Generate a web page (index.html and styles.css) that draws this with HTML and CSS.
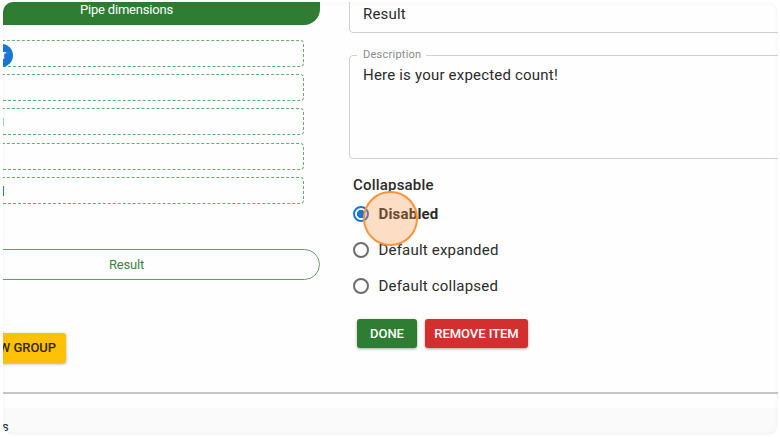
FILE: index.html
```html
<!DOCTYPE html>
<html lang="en">
<head>
<meta charset="utf-8">
<title>Form editor</title>
<link rel="stylesheet" href="styles.css">
</head>
<body>
<div class="frame">
  <main class="editor">
    <section class="groups">
      <div class="pill pill-active">Pipe dimensions</div>
      <div class="slots">
        <div class="slot"><span class="badge">r</span></div>
        <div class="slot"></div>
        <div class="slot"><span class="badge-edge"></span></div>
        <div class="slot"></div>
        <div class="slot"><span class="badge-edge badge-edge-dark"></span></div>
      </div>
      <div class="pill pill-outline">Result</div>
      <button class="btn btn-new">NEW GROUP</button>
    </section>
    <section class="settings">
      <div class="field field-title">Result</div>
      <fieldset class="field field-description">
        <legend>Description</legend>
        <div class="value">Here is your expected count!</div>
      </fieldset>
      <h2 class="heading">Collapsable</h2>
      <div class="options">
        <div class="option selected"><span class="radio"></span><span>Disabled</span><span class="pointer"></span></div>
        <div class="option"><span class="radio"></span><span>Default expanded</span></div>
        <div class="option"><span class="radio"></span><span>Default collapsed</span></div>
      </div>
      <div class="actions">
        <button class="btn btn-done">DONE</button>
        <button class="btn btn-remove">REMOVE ITEM</button>
      </div>
    </section>
  </main>
  <footer class="footer">s</footer>
</div>
</body>
</html>
```
FILE: styles.css
```css
* { box-sizing: border-box; }

body {
  margin: 0;
  background: #fff;
  font-family: Roboto, "Liberation Sans", sans-serif;
  color: #2b2b2b;
}

.frame {
  position: relative;
  width: 775px;
  height: 433px;
  margin: 2px 2px 2px 3px;
  overflow: hidden;
  border-radius: 10px;
  background: #fefefe;
}

.frame::after {
  content: "";
  position: absolute;
  inset: 0;
  border-radius: 10px;
  box-shadow: inset 0 0 5px rgba(0, 0, 0, 0.05);
  pointer-events: none;
}

.editor {
  display: flex;
  height: 392px;
  border-bottom: 2px solid #c6c6c6;
}

.groups {
  width: 387px;
  margin-left: -70px;
  flex: none;
}

.pill {
  display: flex;
  align-items: center;
  justify-content: center;
  height: 31px;
  border-radius: 16px;
  font-size: 13px;
  letter-spacing: -0.2px;
}

.pill-active {
  height: 39px;
  margin-top: -16px;
  padding-top: 8px;
  background: #2e7d32;
  color: #fff;
}

.pill-outline {
  border: 1px solid #68a06b;
  color: #3c8540;
  margin-top: 45px;
}

.slots {
  display: flex;
  flex-direction: column;
  gap: 7.2px;
  padding: 15px 16px 0 20px;
}

.slot {
  display: flex;
  align-items: center;
  height: 27px;
  border: 1px dashed #66ad6a;
  border-radius: 4px;
}

.badge {
  width: 23px;
  height: 23px;
  margin: 3px 0 0 36px;
  padding-right: 7px;
  border-radius: 50%;
  background: #1976d2;
  color: #fff;
  font-size: 12px;
  font-weight: 500;
  line-height: 22px;
  text-align: right;
}

.badge-edge {
  width: 1px;
  height: 8px;
  margin-left: 49px;
  background: #a9cdf0;
}

.badge-edge-dark {
  height: 10px;
  margin-top: 2px;
  background: #3479bd;
}

.btn {
  height: 29px;
  padding: 0;
  border: 0;
  border-radius: 3px;
  font: 500 13px Roboto, "Liberation Sans", sans-serif;
  letter-spacing: -0.05px;
  color: #fff;
  box-shadow: 0 1px 3px rgba(0, 0, 0, 0.35);
}

.btn-new {
  display: block;
  width: 103px;
  height: 30px;
  margin: 53px 0 0 30px;
  padding-right: 10px;
  background: #ffc107;
  color: #32270a;
  text-align: right;
}

.settings {
  flex: none;
  width: 460px;
  margin-left: 29px;
}

.field {
  border: 1px solid #d0d0d0;
  border-radius: 4px;
  font-size: 15px;
  letter-spacing: 0.2px;
}

.field-title {
  height: 43px;
  margin-top: -12px;
  padding: 15px 13px 0;
  line-height: 17px;
}

.field-description {
  height: 110.5px;
  margin: 15px 0 0;
  padding: 0 13px;
}

.field-description legend {
  margin-left: -6px;
  padding: 0 5px 0 6px;
  font-size: 11px;
  letter-spacing: 0.25px;
  line-height: 14px;
  color: #8a8a8a;
}

.value {
  margin-top: 5px;
  line-height: 17px;
}

.heading {
  margin: 17.5px 0 0 4px;
  font-size: 15px;
  font-weight: 500;
  line-height: 18px;
  letter-spacing: 0.2px;
}

.options {
  display: flex;
  flex-direction: column;
  gap: 18px;
  margin: 11px 0 0 3.5px;
}

.option {
  position: relative;
  display: flex;
  align-items: center;
  gap: 10px;
  height: 18px;
  font-size: 15px;
  letter-spacing: 0.2px;
}

.selected {
  font-weight: 700;
}

.radio {
  width: 16px;
  height: 16px;
  border: 2px solid #6c6c6c;
  border-radius: 50%;
}

.selected .radio {
  border-color: #1976d2;
  background: radial-gradient(circle, #1976d2 3.8px, transparent 4.4px);
}

.pointer {
  position: absolute;
  left: 10.5px;
  top: -14px;
  width: 55px;
  height: 55px;
  border: 2px solid #fb923c;
  border-radius: 50%;
  background: rgba(251, 146, 60, 0.3);
  z-index: 1;
}

.actions {
  display: flex;
  gap: 8px;
  margin: 24px 0 0 8px;
}

.btn-done {
  width: 60px;
  background: #2e7d32;
}

.btn-remove {
  width: 103px;
  background: #d32f2f;
}

.footer {
  height: 27px;
  margin-top: 14px;
  padding-top: 11px;
  margin-left: -1px;
  background: #fafafa;
  font-size: 13px;
  line-height: 16px;
}
```
